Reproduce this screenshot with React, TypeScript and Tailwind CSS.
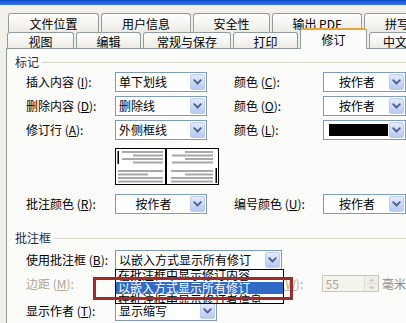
import React from 'react';

const Chevron = () => (
  <svg width="9" height="6" viewBox="0 0 9 6" fill="none">
    <path d="M1.2 1.2 4.5 4.5 7.8 1.2" stroke="#4d6185" strokeWidth="1.8" strokeLinecap="round" strokeLinejoin="round" />
  </svg>
);

const ArrowButton = () => (
  <div className="w-[15px] shrink-0 rounded-[2px] border border-[#bfcdf0] bg-linear-to-b from-[#e3eafd] to-[#b5c9f5] flex items-center justify-center">
    <Chevron />
  </div>
);

const Select = ({ className = '', center = false, children }: { className?: string; center?: boolean; children?: React.ReactNode }) => (
  <div className={`h-full flex border border-[#7f9db9] bg-white p-px ${className}`}>
    <div className={`flex-1 flex items-center whitespace-nowrap overflow-hidden ${center ? 'justify-center' : 'pl-[2px]'}`}>
      {children}
    </div>
    <ArrowButton />
  </div>
);

const Label = ({ text, k, dim = false, className = '' }: { text: string; k: string; dim?: boolean; className?: string }) => (
  <div className={`shrink-0 whitespace-nowrap ${dim ? 'text-[#aca899]' : 'text-black'} ${className}`}>
    {text} (<span className="underline underline-offset-[1px]">{k}</span>):
  </div>
);

const Tab = ({ className = '', children }: { className?: string; children: React.ReactNode }) => (
  <div className={`h-full shrink-0 border border-b-0 border-[#919b9c] rounded-t-[3px] bg-linear-to-b from-white to-[#ecebe5] flex items-center justify-center whitespace-nowrap ${className}`}>
    {children}
  </div>
);

const GroupHeader = ({ className = '', children }: { className?: string; children: React.ReactNode }) => (
  <div className={`flex items-center h-[14px] pl-[8px] ${className}`}>
    <span className="text-[#1f2c50] pr-[3px]">{children}</span>
    <div className="flex-1 h-px bg-[#d6d5cb]" />
  </div>
);

// little picture of the "外侧框线" revision bar preview
const Preview = () => (
  <svg width="104" height="37" viewBox="0 0 104 37">
    <rect x="0" y="0" width="104" height="37" fill="#fff" />
    <g fill="#a8a8a8">
      <rect x="7" y="3" width="41" height="2" />
      <rect x="18" y="6.5" width="30" height="2" />
      <rect x="7" y="10" width="41" height="2" />
      <rect x="18" y="13.5" width="30" height="2" />
      <rect x="3" y="22" width="45" height="2" />
      <rect x="3" y="25.5" width="30" height="2" />
      <rect x="3" y="29" width="45" height="2" />
      <rect x="3" y="32.5" width="45" height="2" />

      <rect x="70" y="3" width="28" height="2" />
      <rect x="57" y="6.5" width="41" height="2" />
      <rect x="70" y="10" width="28" height="2" />
      <rect x="57" y="13.5" width="41" height="2" />
      <rect x="56" y="22" width="42" height="2" />
      <rect x="70" y="25.5" width="28" height="2" />
      <rect x="56" y="29" width="42" height="2" />
      <rect x="56" y="32.5" width="42" height="2" />
    </g>
    <rect x="2.5" y="3" width="1.5" height="13" fill="#000" />
    <rect x="100.5" y="20" width="1.5" height="15" fill="#000" />
    <rect x="50" y="0" width="2" height="37" fill="#000" />
    <rect x="0.5" y="0.5" width="103" height="36" fill="none" stroke="#000" />
  </svg>
);

const SpinArrow = ({ up }: { up?: boolean }) => (
  <svg width="7" height="4" viewBox="0 0 7 4">
    <path d={up ? 'M0.5 3.5 3.5 0.5 6.5 3.5Z' : 'M0.5 0.5 3.5 3.5 6.5 0.5Z'} fill="#c9c7ba" />
  </svg>
);

export default function App() {
  return (
    <div className="w-[406px] h-[323px] overflow-hidden bg-[#f1f0eb] text-[12px] leading-none text-black [font-family:'Noto_Sans_CJK_SC','Noto_Sans',sans-serif]">
      <div className="h-[5px] bg-linear-to-b from-[#0a4ccc] to-[#3a7be6]" />

      {/* tab rows */}
      <div className="pt-[8px] pl-[8px]">
        <div className="flex gap-[2px] h-[19px]">
          <Tab className="w-[91px] pt-px">文件位置</Tab>
          <Tab className="w-[90px] pt-px">用户信息</Tab>
          <Tab className="w-[77px] pt-px">安全性</Tab>
          <Tab className="w-[90px] pt-px">输出 PDF</Tab>
          <Tab className="w-[90px] pt-px">拼写检查</Tab>
        </div>
        <div className="flex gap-[2px] h-[16px] items-end -ml-px">
          <Tab className="w-[67px] pt-[2px]">视图</Tab>
          <Tab className="w-[65px] pt-[2px]">编辑</Tab>
          <Tab className="w-[88px] pt-[2px]">常规与保存</Tab>
          <Tab className="w-[65px] pt-[2px]">打印</Tab>
          <div className="relative z-10 w-[67px] h-[21px] -mb-px shrink-0 bg-[#fbfbf9] border-x border-[#919b9c] border-t-2 border-t-[#e8a33c] rounded-t-[3px] flex items-center justify-center">
            修订
          </div>
          <Tab className="w-[76px] pt-[2px]">中文版式</Tab>
        </div>
      </div>

      {/* panel */}
      <div className="ml-[6px] h-[275px] border-l border-t border-[#919b9c] bg-[#fbfbf9]">
        <GroupHeader className="mt-[6px]">标记</GroupHeader>

        <div className="mt-[3px] h-[20px] flex items-center pl-[19px]">
          <Label text="插入内容" k="I" className="w-[89px]" />
          <Select className="w-[93px]">单下划线</Select>
          <Label text="颜色" k="C" className="w-[89px] ml-[27px]" />
          <Select className="w-[84px]" center>按作者</Select>
        </div>
        <div className="mt-[4px] h-[20px] flex items-center pl-[19px]">
          <Label text="删除内容" k="D" className="w-[89px]" />
          <Select className="w-[93px]">删除线</Select>
          <Label text="颜色" k="O" className="w-[89px] ml-[27px]" />
          <Select className="w-[84px]" center>按作者</Select>
        </div>
        <div className="mt-[4px] h-[20px] flex items-center pl-[19px]">
          <Label text="修订行" k="A" className="w-[89px]" />
          <Select className="w-[93px]">外侧框线</Select>
          <Label text="颜色" k="L" className="w-[89px] ml-[27px]" />
          <Select className="w-[84px]">
            <div className="ml-[2px] w-[59px] h-[12px] bg-black" />
          </Select>
        </div>

        <div className="mt-[8px] pl-[108px] h-[37px]">
          <Preview />
        </div>

        <div className="mt-[9px] h-[20px] flex items-center pl-[19px]">
          <Label text="批注颜色" k="R" className="w-[89px]" />
          <Select className="w-[93px]" center>按作者</Select>
          <Label text="编号颜色" k="U" className="w-[89px] ml-[27px]" />
          <Select className="w-[84px]" center>按作者</Select>
        </div>

        <GroupHeader className="mt-[17px]">批注框</GroupHeader>

        <div className="mt-[5px] h-[20px] flex items-center pl-[19px]">
          <Label text="使用批注框" k="B" className="w-[89px]" />
          <div className="relative w-[167px] h-full">
            <Select className="w-full">以嵌入方式显示所有修订</Select>
            <div className="absolute left-0 top-[19px] z-20 w-[169px] h-[35px] border border-black bg-white overflow-hidden">
              <div className="-mt-[3px] flex flex-col whitespace-nowrap">
                <div className="h-[15px] leading-[15px] pl-[2px]">在批注框中显示修订内容</div>
                <div className="h-[12px] leading-[12px] pl-[2px] bg-[#316ac5] text-white">以嵌入方式显示所有修订</div>
                <div className="h-[12px] leading-[12px] pl-[2px]">在批注框中显示修订者信息</div>
              </div>
            </div>
            <div className="absolute -left-[22px] top-[27px] z-30 w-[200px] h-[23px] border-[3px] border-[#a12a2b]" />
          </div>
        </div>

        <div className="mt-[5px] h-[17px] flex items-center pl-[19px]">
          <Label text="边距" k="M" dim className="w-[89px]" />
          <Select className="w-[93px]">靠右</Select>
          <Label text="宽度" k="W" dim className="w-[89px] ml-[27px] pl-[22px]" />
          <div className="w-[59px] h-full border border-[#c9c7ba] bg-[#f4f3ee] flex">
            <div className="flex-1 flex items-center pl-[3px] text-[#aca899]">55</div>
            <div className="w-[14px] flex flex-col border-l border-[#e2e0d6]">
              <div className="flex-1 bg-[#efeee7] flex items-center justify-center border-b border-[#e2e0d6]">
                <SpinArrow up />
              </div>
              <div className="flex-1 bg-[#efeee7] flex items-center justify-center">
                <SpinArrow />
              </div>
            </div>
          </div>
          <span className="ml-[3px] whitespace-nowrap text-[#8c8c8c]">毫米</span>
        </div>

        <div className="mt-[9px] h-[20px] flex items-center pl-[19px]">
          <Label text="显示作者" k="T" className="w-[89px]" />
          <Select className="w-[102px]">显示缩写</Select>
        </div>
      </div>
    </div>
  );
}
